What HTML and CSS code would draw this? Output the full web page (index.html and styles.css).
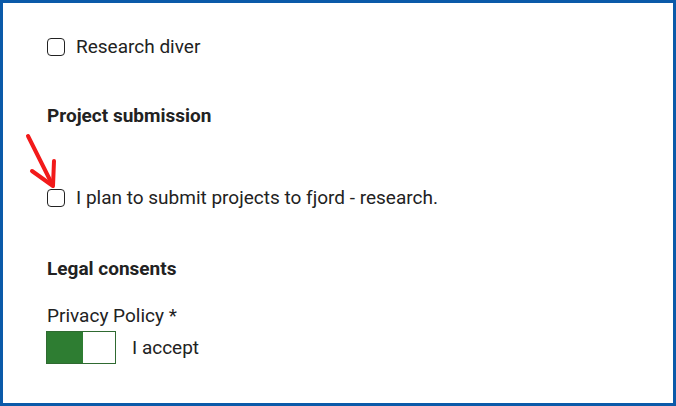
FILE: index.html
```html
<!DOCTYPE html>
<html>
<head>
<meta charset="utf-8">
<link rel="stylesheet" href="styles.css">
</head>
<body>
<div class="frame">
  <div class="row row-first">
    <span class="box"></span><span class="label">Research diver</span>
  </div>
  <h2 class="heading h-project">Project submission</h2>
  <div class="row row-plan">
    <span class="box"></span><span class="label">I plan to submit projects to fjord - research.</span>
  </div>
  <h2 class="heading h-legal">Legal consents</h2>
  <div class="field-label">Privacy Policy *</div>
  <div class="toggle-row">
    <span class="toggle"><span class="toggle-on"></span></span>
    <span class="label">I accept</span>
  </div>
  <svg class="arrow" width="40" height="70" viewBox="0 0 40 70">
    <path d="M7 5 L31 53" stroke="#f21a1a" stroke-width="4" fill="none" stroke-linecap="round"/>
    <path d="M11 40 L32 55 L33 30" stroke="#f21a1a" stroke-width="4" fill="none" stroke-linecap="round" stroke-linejoin="round"/>
  </svg>
</div>
</body>
</html>
```
FILE: styles.css
```css
html, body {
  margin: 0;
  padding: 0;
  background: #ffffff;
}
.frame {
  position: relative;
  box-sizing: border-box;
  width: 676px;
  height: 406px;
  border: 3px solid #0b5aa9;
  padding: 32px 0 0 43px;
  font-family: Roboto, "Liberation Sans", sans-serif;
  color: #222222;
  font-size: 19px;
}
.row {
  display: flex;
  align-items: center;
  height: 24px;
}
.box {
  box-sizing: border-box;
  width: 18px;
  height: 18px;
  border: 1.6px solid #222;
  border-radius: 4px;
  margin: 0 11px 0 1px;
}
.label {
  line-height: 24px;
}
.heading {
  margin: 0;
  font-size: 19px;
  font-weight: 700;
  line-height: 24px;
  padding-left: 1px;
}
.h-project { margin-top: 45px; }
.row-plan { margin-top: 58px; }
.h-legal { margin-top: 47px; }
.field-label {
  margin-top: 23px;
  line-height: 24px;
  padding-left: 1px;
}
.toggle-row {
  margin-top: 3px;
  display: flex;
  align-items: center;
}
.toggle {
  box-sizing: border-box;
  display: flex;
  width: 70px;
  height: 33px;
  border: 1px solid #2f6a31;
  margin-right: 16px;
}
.toggle-on {
  width: 36px;
  background: #2e7d32;
}
.arrow {
  position: absolute;
  left: 18px;
  top: 128px;
}
```
